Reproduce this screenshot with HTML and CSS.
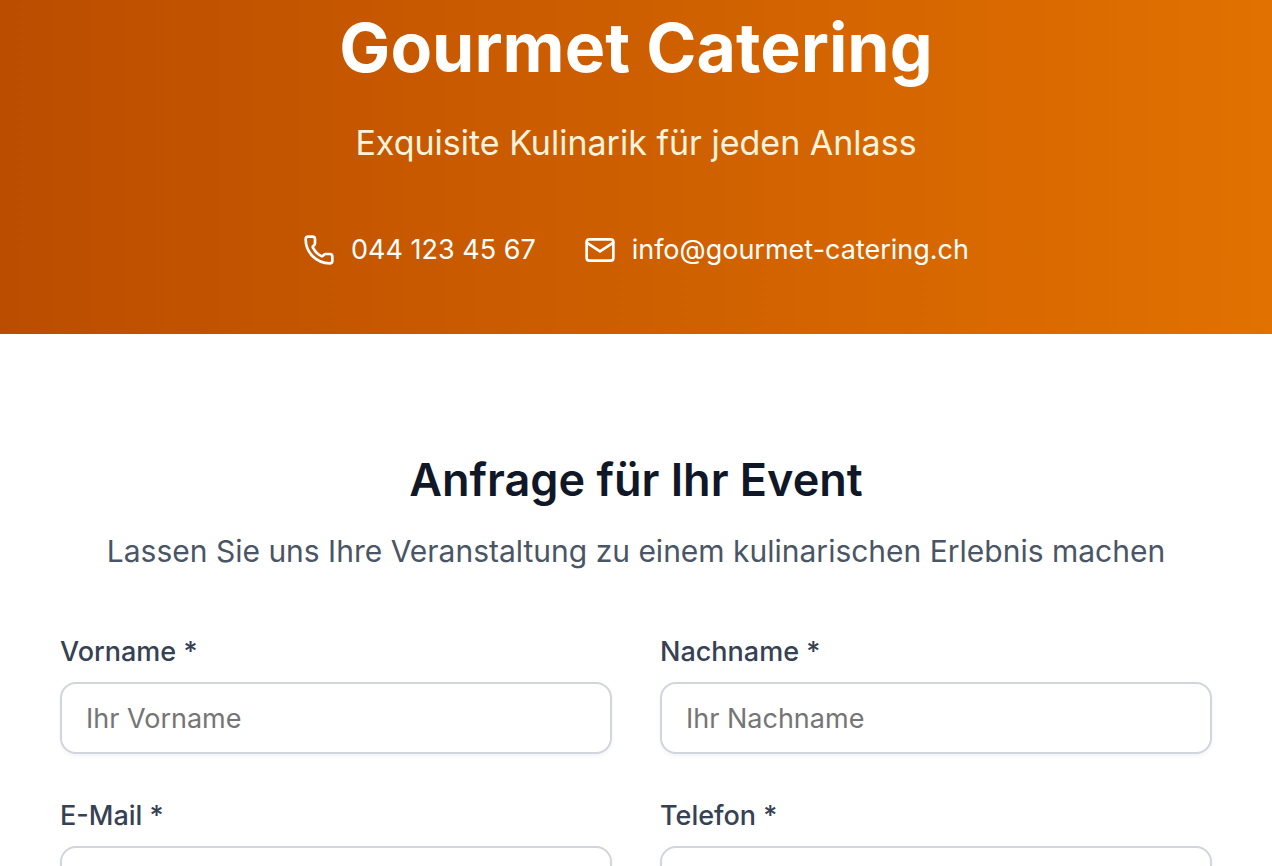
FILE: index.html
```html
<!DOCTYPE html>
<html lang="de">
<head>
<meta charset="utf-8">
<meta name="viewport" content="width=device-width, initial-scale=1">
<title>Gourmet Catering</title>
<link rel="stylesheet" href="styles.css">
</head>
<body>
<header class="hero">
  <h1 class="hero-title">Gourmet Catering</h1>
  <p class="hero-tagline">Exquisite Kulinarik für jeden Anlass</p>
  <div class="contact">
    <div class="contact-item">
      <svg class="icon" viewBox="0 0 24 24" aria-hidden="true"><path d="M13.832 16.568a1 1 0 0 0 1.213-.303l.355-.465A2 2 0 0 1 17 15h3a2 2 0 0 1 2 2v3a2 2 0 0 1-2 2A18 18 0 0 1 2 4a2 2 0 0 1 2-2h3a2 2 0 0 1 2 2v3a2 2 0 0 1-.8 1.6l-.468.351a1 1 0 0 0-.292 1.233 14 14 0 0 0 6.392 6.384"/></svg>
      <span>044 123 45 67</span>
    </div>
    <div class="contact-item">
      <svg class="icon" viewBox="0 0 24 24" aria-hidden="true"><path d="m22 6.4-10 6.6L2 6.4"/><rect width="20" height="16" x="2" y="4" rx="2"/></svg>
      <span>info@gourmet-catering.ch</span>
    </div>
  </div>
</header>
<main class="inquiry">
  <h2 class="inquiry-title">Anfrage für Ihr Event</h2>
  <p class="inquiry-text">Lassen Sie uns Ihre Veranstaltung zu einem kulinarischen Erlebnis machen</p>
  <form class="form">
    <div class="field">
      <label for="vorname">Vorname *</label>
      <input id="vorname" type="text" placeholder="Ihr Vorname" required>
    </div>
    <div class="field">
      <label for="nachname">Nachname *</label>
      <input id="nachname" type="text" placeholder="Ihr Nachname" required>
    </div>
    <div class="field">
      <label for="email">E-Mail *</label>
      <input id="email" type="email" required>
    </div>
    <div class="field">
      <label for="telefon">Telefon *</label>
      <input id="telefon" type="tel" required>
    </div>
  </form>
</main>
</body>
</html>
```
FILE: styles.css
```css
* { box-sizing: border-box; }
html { scrollbar-width: none; }
body {
  margin: 0;
  background: #fff;
  color: #101828;
  font-family: Inter, "Liberation Sans", sans-serif;
}
h1, h2, p { margin: 0; }

.hero {
  padding: 10px 24px 64px;
  background: linear-gradient(to right, #bb4d00, #e17100);
  color: #fff;
  text-align: center;
}
.hero-title { font-size: 68px; line-height: 74px; font-weight: 700; }
.hero-tagline { margin-top: 32px; font-size: 34px; line-height: 54px; color: #fef3dc; }
.contact {
  display: flex;
  justify-content: center;
  gap: 48px;
  margin-top: 60px;
  font-size: 27px;
  line-height: 40px;
}
.contact-item { display: flex; align-items: center; gap: 16px; }
.icon {
  width: 32px;
  height: 32px;
  fill: none;
  stroke: currentColor;
  stroke-width: 2;
  stroke-linecap: round;
  stroke-linejoin: round;
}

.inquiry { padding: 112px 60px 48px; text-align: center; }
.inquiry-title { font-size: 45px; line-height: 68px; font-weight: 600; }
.inquiry-text { margin-top: 12px; font-size: 30px; line-height: 50px; color: #4a5565; }

.form {
  display: grid;
  grid-template-columns: 1fr 1fr;
  gap: 48px;
  margin-top: 62px;
  text-align: left;
}
.field { display: flex; flex-direction: column; gap: 16px; min-width: 0; }
.field label { font-size: 27px; line-height: 28px; font-weight: 500; color: #364153; }
.field input {
  width: 100%;
  height: 72px;
  padding: 0 24px;
  border: 2px solid #d1d5dc;
  border-radius: 16px;
  background: #fff;
  box-shadow: 0 2px 4px rgb(0 0 0 / 5%);
  font: inherit;
  font-size: 27px;
  color: #101828;
}
.field input::placeholder { color: #757575; opacity: 1; }
```
